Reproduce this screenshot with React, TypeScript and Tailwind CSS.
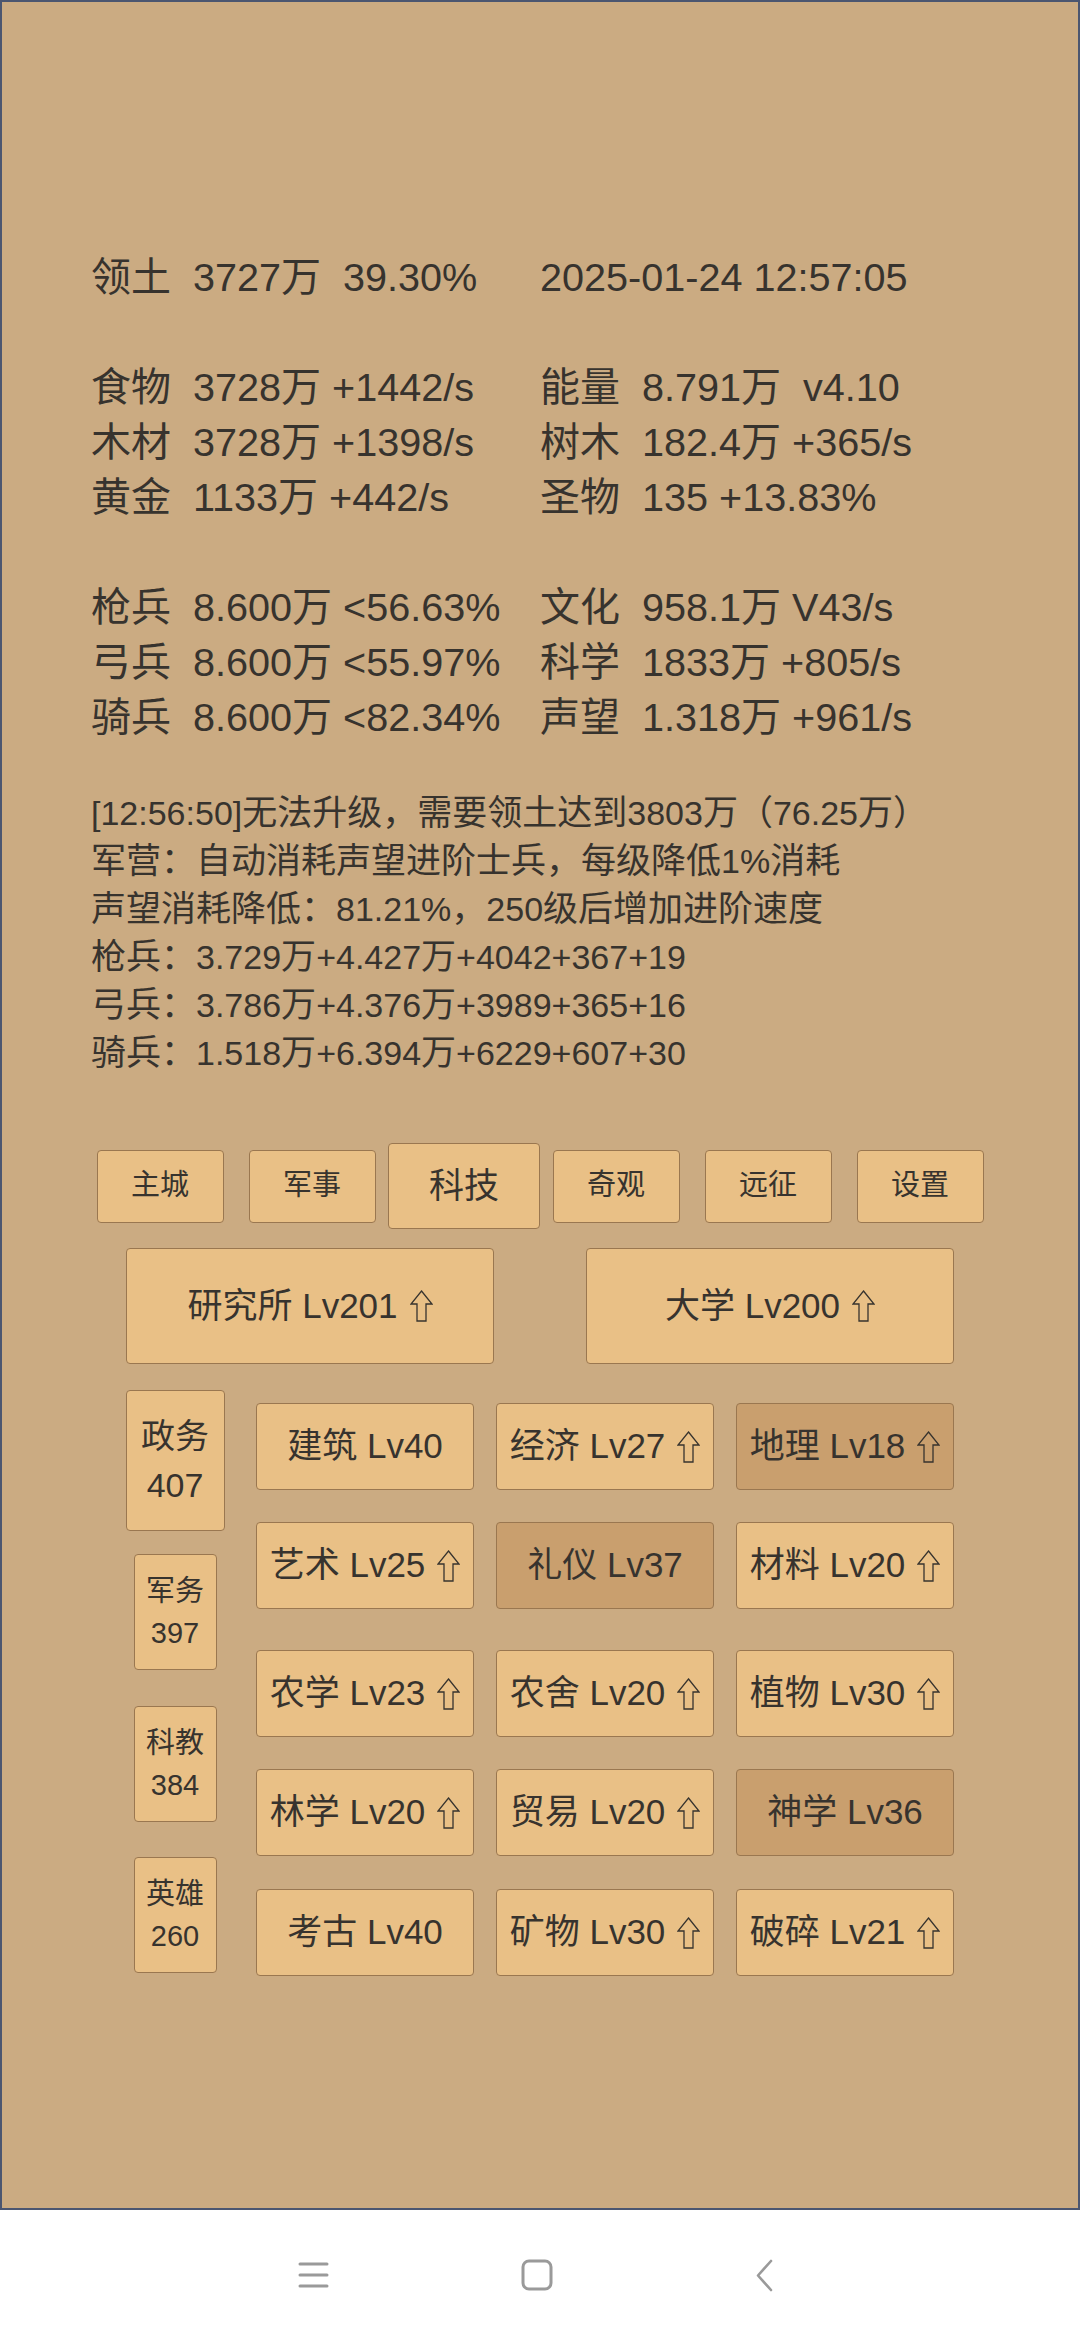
import React from 'react';

const FONT = { fontFamily: '"Liberation Sans", "Noto Sans CJK SC", sans-serif' };

const stats: [string, string][] = [
  ['领土  3727万  39.30%', '2025-01-24 12:57:05'],
  ['', ''],
  ['食物  3728万 +1442/s', '能量  8.791万  v4.10'],
  ['木材  3728万 +1398/s', '树木  182.4万 +365/s'],
  ['黄金  1133万 +442/s', '圣物  135 +13.83%'],
  ['', ''],
  ['枪兵  8.600万 <56.63%', '文化  958.1万 V43/s'],
  ['弓兵  8.600万 <55.97%', '科学  1833万 +805/s'],
  ['骑兵  8.600万 <82.34%', '声望  1.318万 +961/s'],
];

const infoLines = [
  '[12:56:50]无法升级，需要领土达到3803万（76.25万）',
  '军营：自动消耗声望进阶士兵，每级降低1%消耗',
  '声望消耗降低：81.21%，250级后增加进阶速度',
  '枪兵：3.729万+4.427万+4042+367+19',
  '弓兵：3.786万+4.376万+3989+365+16',
  '骑兵：1.518万+6.394万+6229+607+30',
];

const tabs = ['主城', '军事', '科技', '奇观', '远征', '设置'];

type Tech = { name: string; up: boolean; dark?: boolean };

const techRows: { mt: string; items: Tech[] }[] = [
  {
    mt: 'mt-[13px]',
    items: [
      { name: '建筑 Lv40', up: false },
      { name: '经济 Lv27', up: true },
      { name: '地理 Lv18', up: true, dark: true },
    ],
  },
  {
    mt: 'mt-[32px]',
    items: [
      { name: '艺术 Lv25', up: true },
      { name: '礼仪 Lv37', up: false, dark: true },
      { name: '材料 Lv20', up: true },
    ],
  },
  {
    mt: 'mt-[41px]',
    items: [
      { name: '农学 Lv23', up: true },
      { name: '农舍 Lv20', up: true },
      { name: '植物 Lv30', up: true },
    ],
  },
  {
    mt: 'mt-[32px]',
    items: [
      { name: '林学 Lv20', up: true },
      { name: '贸易 Lv20', up: true },
      { name: '神学 Lv36', up: false, dark: true },
    ],
  },
  {
    mt: 'mt-[33px]',
    items: [
      { name: '考古 Lv40', up: false },
      { name: '矿物 Lv30', up: true },
      { name: '破碎 Lv21', up: true },
    ],
  },
];

// CJK runs render a touch larger than the latin text around them
function Mixed({ text, cjk }: { text: string; cjk: string }) {
  const parts = text.split(/([\u3000-\u9fff\uff00-\uffef]+)/);
  return (
    <>
      {parts.map((p, i) =>
        i % 2 === 1 ? (
          <span key={i} className={cjk}>
            {p}
          </span>
        ) : (
          p
        )
      )}
    </>
  );
}

function UpArrow() {
  return (
    <svg width="23" height="32" viewBox="0 0 23 32" className="shrink-0">
      <path
        d="M11.5 1 L22 14 L16 14 L16 31 L7 31 L7 14 L1 14 Z"
        fill="none"
        stroke="#37332e"
        strokeWidth="1.3"
      />
    </svg>
  );
}

export default function App() {
  return (
    <div className="w-[1080px] h-[2340px] flex flex-col bg-white text-[#37332e]" style={FONT}>
      <div className="h-[2210px] border-2 border-[#4b5670] bg-[#cbab82] flex flex-col">
        {/* stats */}
        <div className="pt-[248px] pl-[89px] text-[39.6px] leading-[55px]">
          {stats.map(([l, r], i) => (
            <div key={i} className="grid grid-cols-[449px_auto] h-[55px] whitespace-pre">
              <span>
                <Mixed text={l} cjk="text-[40px]" />
              </span>
              <span>
                <Mixed text={r} cjk="text-[40px]" />
              </span>
            </div>
          ))}
        </div>

        {/* log / info */}
        <div className="mt-[44px] pl-[89px] text-[34px] leading-[48px] whitespace-pre">
          {infoLines.map((t, i) => (
            <div key={i}>
              <Mixed text={t} cjk="text-[35px]" />
            </div>
          ))}
        </div>

        {/* tabs */}
        <div className="mt-[66px] flex justify-center">
          {tabs.map((t) => {
            const active = t === '科技';
            return (
              <div key={t} className="w-[152px] h-[86px] flex items-center justify-center">
                <div
                  className={`flex items-center justify-center rounded-[4px] border border-[#9a7750] bg-[#e9c086] ${
                    active ? 'w-[152px] h-[86px] text-[35px]' : 'w-[127px] h-[73px] text-[29px]'
                  }`}
                >
                  {t}
                </div>
              </div>
            );
          })}
        </div>

        {/* main buildings */}
        <div className="mt-[19px] flex justify-center gap-[92px] text-[35px]">
          {['研究所 Lv201', '大学 Lv200'].map((t) => (
            <div
              key={t}
              className="w-[368px] h-[116px] flex items-center justify-center gap-[12px] rounded-[4px] border border-[#9a7750] bg-[#e9c086]"
            >
              <span className="whitespace-pre">{t}</span>
              <UpArrow />
            </div>
          ))}
        </div>

        {/* categories + tech grid */}
        <div className="mt-[26px] flex pl-[123px]">
          <div className="w-[100px] flex flex-col items-center">
            <div className="w-[99px] h-[141px] flex flex-col items-center justify-center rounded-[4px] border border-[#9a7750] bg-[#e9c086] text-[34px] leading-[49px]">
              <span>政务</span>
              <span>407</span>
            </div>
            {[
              ['军务', '397', 'mt-[23px]'],
              ['科教', '384', 'mt-[36px]'],
              ['英雄', '260', 'mt-[35px]'],
            ].map(([a, b, mt]) => (
              <div
                key={a}
                className={`${mt} w-[83px] h-[116px] flex flex-col items-center justify-center rounded-[4px] border border-[#9a7750] bg-[#e9c086] text-[29px] leading-[42px]`}
              >
                <span>{a}</span>
                <span>{b}</span>
              </div>
            ))}
          </div>

          <div className="ml-[31px] flex flex-col">
            {techRows.map((row, ri) => (
              <div key={ri} className={`${row.mt} flex gap-[22px]`}>
                {row.items.map((it) => (
                  <div
                    key={it.name}
                    className={`w-[218px] h-[87px] flex items-center justify-center gap-[12px] rounded-[4px] border border-[#9a7750] text-[35px] ${
                      it.dark ? 'bg-[#c99f6e]' : 'bg-[#e9c086]'
                    }`}
                  >
                    <span className="whitespace-pre">{it.name}</span>
                    {it.up && <UpArrow />}
                  </div>
                ))}
              </div>
            ))}
          </div>
        </div>
      </div>

      {/* system nav bar */}
      <div className="flex-1 relative">
        <div className="absolute left-[298px] top-[52px]">
          <svg width="31" height="26" viewBox="0 0 31 26">
            <g stroke="#9a9a9a" strokeWidth="3" strokeLinecap="round">
              <line x1="2" y1="2" x2="29" y2="2" />
              <line x1="2" y1="13" x2="29" y2="13" />
              <line x1="2" y1="24" x2="29" y2="24" />
            </g>
          </svg>
        </div>
        <div className="absolute left-[521px] top-[49px]">
          <svg width="32" height="32" viewBox="0 0 32 32">
            <rect x="2" y="2" width="28" height="28" rx="6" fill="none" stroke="#9a9a9a" strokeWidth="3" />
          </svg>
        </div>
        <div className="absolute left-[755px] top-[49px]">
          <svg width="19" height="33" viewBox="0 0 19 33">
            <polyline points="16,2 3,16.5 16,31" fill="none" stroke="#9a9a9a" strokeWidth="2.6" strokeLinecap="round" strokeLinejoin="round" />
          </svg>
        </div>
      </div>
    </div>
  );
}
